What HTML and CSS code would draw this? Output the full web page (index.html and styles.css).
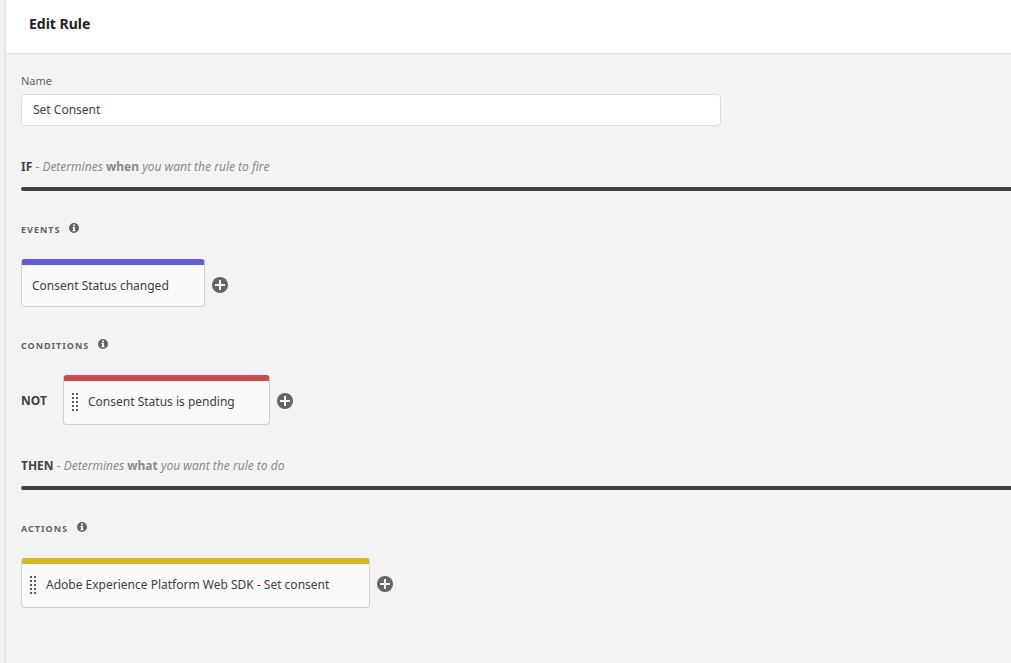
FILE: index.html
```html
<!DOCTYPE html>
<html lang="en">
<head>
<meta charset="utf-8">
<title>Edit Rule</title>
<link rel="stylesheet" href="styles.css">
</head>
<body>
<svg class="symbols" aria-hidden="true">
  <symbol id="info" viewBox="0 0 10 10">
    <circle cx="5" cy="5" r="5" fill="#646464"/>
    <path d="M4 1.6h2v1.6H4zM3.4 4H6v3.2h.7v1H3.4v-1H4V5h-.6z" fill="#f3f3f3"/>
  </symbol>
  <symbol id="plus" viewBox="0 0 16 16">
    <circle cx="8" cy="8" r="8" fill="#646464"/>
    <path d="M7 3h2v4h4v2H9v4H7V9H3V7h4z" fill="#f6f6f6"/>
  </symbol>
  <symbol id="grip" viewBox="0 0 6 18">
    <path d="M0 0h2v2H0zM4 0h2v2H4zM0 4h2v2H0zM4 4h2v2H4zM0 8h2v2H0zM4 8h2v2H4zM0 12h2v2H0zM4 12h2v2H4zM0 16h2v2H0zM4 16h2v2H4z" fill="#5c5c5c"/>
  </symbol>
</svg>
<div class="panel">
  <header class="header"><h1 class="title">Edit Rule</h1></header>
  <main class="content">
    <form class="field">
      <label class="label" for="name">Name</label>
      <input class="input" id="name" type="text" value="Set Consent">
    </form>

    <h2 class="clause"><span class="keyword">IF</span> - <em>Determines</em> <b>when</b> <em>you want the rule to fire</em></h2>

    <section class="group">
      <h3 class="group-title">Events <svg class="info"><use href="#info"/></svg></h3>
      <div class="row">
        <button class="card card-event" type="button">Consent Status changed</button>
        <button class="add" type="button" aria-label="Add event"><svg class="plus"><use href="#plus"/></svg></button>
      </div>
    </section>

    <section class="group">
      <h3 class="group-title">Conditions <svg class="info"><use href="#info"/></svg></h3>
      <div class="row">
        <span class="not">NOT</span>
        <button class="card card-draggable card-condition" type="button"><svg class="grip"><use href="#grip"/></svg>Consent Status is pending</button>
        <button class="add" type="button" aria-label="Add condition"><svg class="plus"><use href="#plus"/></svg></button>
      </div>
    </section>

    <h2 class="clause"><span class="keyword">THEN</span> - <em>Determines</em> <b>what</b> <em>you want the rule to do</em></h2>

    <section class="group">
      <h3 class="group-title">Actions <svg class="info"><use href="#info"/></svg></h3>
      <div class="row">
        <button class="card card-draggable card-action" type="button"><svg class="grip"><use href="#grip"/></svg>Adobe Experience Platform Web SDK - Set consent</button>
        <button class="add" type="button" aria-label="Add action"><svg class="plus"><use href="#plus"/></svg></button>
      </div>
    </section>
  </main>
</div>
</body>
</html>
```
FILE: styles.css
```css
* {
  box-sizing: border-box;
}

body {
  margin: 0;
  padding-left: 4px;
  background: #f3f3f3;
  color: #414141;
  font: 12px/20px "Noto Sans", sans-serif;
}

.symbols {
  display: none;
}

.panel {
  min-height: 100vh;
  border-left: 2px solid #e6e6e6;
}

.header {
  padding: 14px 23px 19px;
  border-bottom: 1px solid #e2e2e2;
  background: #fff;
}

.title {
  margin: 0;
  color: #222;
  font-size: 14px;
  line-height: 20px;
}

.content {
  padding: 20px 0 20px 15px;
}

.field {
  display: flex;
  flex-direction: column;
  gap: 6px;
  margin-bottom: 31px;
}

.label {
  color: #646464;
  font-size: 11px;
  line-height: 14px;
}

.input {
  width: 700px;
  max-width: 100%;
  height: 32px;
  padding: 0 11px 2px;
  border: 1px solid #dcdcdc;
  border-radius: 4px;
  background: #fff;
  color: #414141;
  font: inherit;
}

.clause {
  margin: 0 0 31px;
  color: #8a8a8a;
  font-size: 12px;
  font-weight: 400;
  line-height: 20px;
}

.clause::after {
  content: "";
  display: block;
  height: 4px;
  margin-top: 10px;
  border-radius: 2px 0 0 2px;
  background: #414141;
}

.keyword {
  color: #414141;
  font-weight: 700;
}

.group {
  margin-bottom: 31px;
}

.group-title {
  display: flex;
  align-items: flex-start;
  gap: 9px;
  margin: 0 0 23px;
  padding-top: 1px;
  color: #646464;
  font-size: 9px;
  letter-spacing: 1px;
  line-height: 13px;
  text-transform: uppercase;
}

.info {
  width: 10px;
  height: 10px;
}

.row {
  display: flex;
  align-items: center;
}

.not {
  width: 42px;
  padding-top: 2px;
  font-weight: 700;
}

.card {
  display: flex;
  align-items: center;
  min-height: 48px;
  padding: 3px 35px 3px 10px;
  border: 1px solid #d0d0d0;
  border-top: 6px solid;
  border-radius: 4px;
  background: #fafafa;
  color: #414141;
  font: inherit;
}

.card-draggable {
  gap: 10px;
  min-height: 50px;
  padding: 0 34px 2px 8px;
}

.card-event {
  border-top-color: #5e5ce6;
}

.card-condition {
  border-top-color: #cf4a4a;
}

.card-action {
  padding-right: 40px;
  border-top-color: #d5b919;
}

.grip {
  width: 6px;
  height: 18px;
}

.add {
  display: flex;
  padding: 3px 7px 0;
  border: 0;
  background: none;
}

.card-draggable + .add {
  padding-top: 2px;
}

.plus {
  width: 16px;
  height: 16px;
}
```
